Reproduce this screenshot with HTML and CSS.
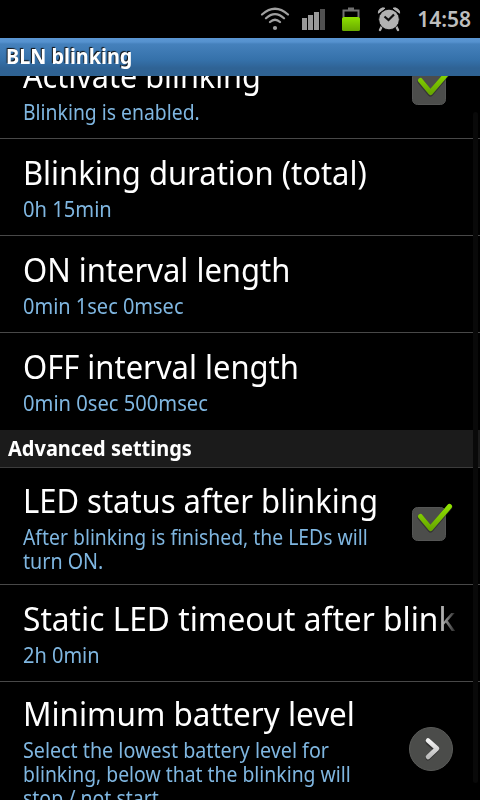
FILE: index.html
```html
<!DOCTYPE html>
<html lang="en">
<head>
<meta charset="utf-8">
<title>BLN blinking</title>
<link rel="stylesheet" href="styles.css">
</head>
<body>
<svg class="defs" width="0" height="0" aria-hidden="true">
  <defs>
    <linearGradient id="green" x1="0" y1="0" x2="0" y2="1"><stop offset="0" stop-color="#8ee000"/><stop offset="1" stop-color="#68a800"/></linearGradient>
    <linearGradient id="silver" x1="0" y1="0" x2="0" y2="1"><stop offset="0" stop-color="#f2f2f2"/><stop offset="1" stop-color="#bcbcbc"/></linearGradient>
    <symbol id="check" viewBox="0 0 44 44">
      <rect x="2.5" y="7.500" width="33" height="33" rx="5" fill="#4c4d4b" stroke="#555655"/>
      <path d="M10.500 17.500 20.500 29.500 39.500 7" fill="none" stroke="#222" stroke-opacity=".55" stroke-width="6" stroke-linecap="round" stroke-linejoin="round"/>
      <path d="M10.500 16.500 20.500 28.500 39.500 6.500" fill="none" stroke="url(#green)" stroke-width="5" stroke-linecap="round" stroke-linejoin="round"/>
    </symbol>
  </defs>
</svg>
<div class="screen">
  <header class="status">
    <svg class="wifi" width="30" height="26" viewBox="0 0 30 26" fill="none" stroke="#a0a0a0" stroke-width="2.2" stroke-linecap="round">
      <path d="M2 8.500Q15-3 28 8.500M6 12.300Q15 4 24 12.300M10 16Q15 11.500 20 16"/><circle cx="15" cy="22" r="2.100" fill="#a0a0a0" stroke="none"/>
    </svg>
    <svg class="signal" width="24" height="22" viewBox="0 0 24 22" fill="#999">
      <path d="M0 10h5v12H0zM6 7h5v15H6zM12 4h5v18h-5z"/><path fill="#505050" d="M18 1h5v21h-5z"/>
    </svg>
    <svg class="battery" width="20" height="26" viewBox="0 0 20 26">
      <path d="M2.500 11V4.500h15V11M7 2.600h6" fill="none" stroke="#707070" stroke-width="2"/>
      <rect x="1" y="11" width="18" height="14" rx="1.500" fill="url(#green)"/>
    </svg>
    <svg class="alarm" width="24" height="26" viewBox="0 0 24 26">
      <path d="M5 20 3 24M19 20l2 4" stroke="#b2b2b2" stroke-width="2.400" stroke-linecap="round"/>
      <path d="M1.300 7.200A5 5 0 0 1 8 2.200ZM22.700 7.200A5 5 0 0 0 16 2.200Z" fill="#b2b2b2" stroke="#b2b2b2" stroke-linejoin="round"/>
      <circle cx="12" cy="13.500" r="10.300" fill="#b2b2b2" stroke="#000" stroke-width=".8"/>
      <path d="M7.500 10.500 11.500 14 17 8.500" fill="none" stroke="#111" stroke-width="2.200"/>
    </svg>
    <span class="clock">14:58</span>
  </header>
  <h1 class="titlebar"><span class="fit">BLN blinking</span></h1>
  <main class="list">
    <section class="row scrolled">
      <div class="text"><h2><span class="fit">Activate blinking</span></h2><p><span class="fit tight">Blinking is enabled.</span></p></div>
      <svg class="check" width="44" height="44"><use href="#check"/></svg>
    </section>
    <section class="row"><div class="text"><h2><span class="fit wide">Blinking duration (total)</span></h2><p><span class="fit widest">0h 15min</span></p></div></section>
    <section class="row"><div class="text"><h2><span class="fit wide">ON interval length</span></h2><p><span class="fit wider">0min 1sec 0msec</span></p></div></section>
    <section class="row last"><div class="text"><h2><span class="fit wide">OFF interval length</span></h2><p><span class="fit widest">0min 0sec 500msec</span></p></div></section>
    <h3 class="category"><span class="fit wider">Advanced settings</span></h3>
    <section class="row two-line">
      <div class="text"><h2><span class="fit wide">LED status after blinking</span></h2><p><span class="fit tight">After blinking is finished, the LEDs will</span><br><span class="fit wide">turn ON.</span></p></div>
      <svg class="check" width="44" height="44"><use href="#check"/></svg>
    </section>
    <section class="row"><div class="text fade"><h2><span class="fit widest">Static LED timeout after blinking</span></h2><p><span class="fit wider">2h 0min</span></p></div></section>
    <section class="row three-line">
      <div class="text"><h2><span class="fit wider">Minimum battery level</span></h2><p><span class="fit wide">Select the lowest battery level for</span><br><span class="fit tight">blinking, below that the blinking will</span><br><span class="fit">stop / not start.</span></p></div>
      <svg class="more" width="46" height="46" viewBox="0 0 46 46">
        <circle cx="23" cy="23" r="21.500" fill="#4b4c4a" stroke="#5a5b59"/>
        <path d="M20 16.500 28.500 24 20 32" fill="none" stroke="#222" stroke-opacity=".6" stroke-width="5" stroke-linecap="round" stroke-linejoin="round"/>
        <path d="M20 14.500 29 22.500 20 31" fill="none" stroke="url(#silver)" stroke-width="4.500" stroke-linecap="round" stroke-linejoin="round"/>
      </svg>
    </section>
    <div class="scrollbar"></div>
  </main>
</div>
</body>
</html>
```
FILE: styles.css
```css
* { box-sizing: border-box; margin: 0; padding: 0; }
body { background: #000; overflow: hidden; font-family: "Noto Sans", "Open Sans", sans-serif; color: #fff; }
.defs { position: absolute; }
.screen { width: 480px; height: 800px; display: flex; flex-direction: column; overflow: hidden; }
.status { height: 38px; flex: none; display: flex; align-items: center; justify-content: flex-end; padding-right: 9px; }
.wifi { margin-right: 12px; }
.signal { margin-right: 15px; }
.battery { margin-right: 16px; }
.alarm { margin-right: 16px; }
.clock { font-size: 21px; font-weight: 600; color: #bebebe; line-height: 38px; }
.titlebar { height: 38px; flex: none; padding-left: 6px; font-size: 21px; line-height: 37px; font-weight: 700; text-shadow: -1px -1px 1px #111; background: linear-gradient(#5b96d2 0, #5592cf 4px, #4581bc 6px, #3571aa 22px, #2f6395 30px, #2f6292); }
.titlebar .fit { transform: scaleX(.943); }
.list { position: relative; flex: 1; min-height: 0; overflow: hidden; }
.row { height: 97px; display: flex; border-bottom: 1px solid #484848; padding: 14px 25px 0 23px; }
.row.last { border-bottom-color: #000; }
.row.scrolled { margin-top: -34px; }
.text { flex: 1; min-width: 0; white-space: nowrap; }
h2 { font-size: 33px; font-weight: 400; line-height: 40px; }
p { margin-top: 4px; font-size: 21px; line-height: 24px; color: #7fb6e0; }
.fit { display: inline-block; vertical-align: top; transform: scaleX(.928); transform-origin: 0 0; }
.fit.tight { transform: scaleX(.922); }
.fit.wide { transform: scaleX(.938); }
.fit.wider { transform: scaleX(.952); }
.fit.widest { transform: scaleX(.96); }
.check { flex: none; margin: 8px 1px 0 0; }
.fade { overflow: hidden; -webkit-mask-image: linear-gradient(90deg, #000 412px, transparent 436px); mask-image: linear-gradient(90deg, #000 412px, transparent 436px); }
.category { height: 38px; padding-left: 8px; font-size: 21px; line-height: 37px; background: #1b1b1b; border-bottom: 1px solid #3c3c3c; }
.row.two-line { height: 117px; padding-top: 13px; }
.two-line .check { margin-top: 19px; }
.row.three-line { height: 145px; padding-top: 12px; }
.more { flex: none; margin: 32px 1px 0 0; }
.scrollbar { position: absolute; right: 2px; top: 36px; width: 5px; height: 671px; border-radius: 3px; background: #090909; }
```
